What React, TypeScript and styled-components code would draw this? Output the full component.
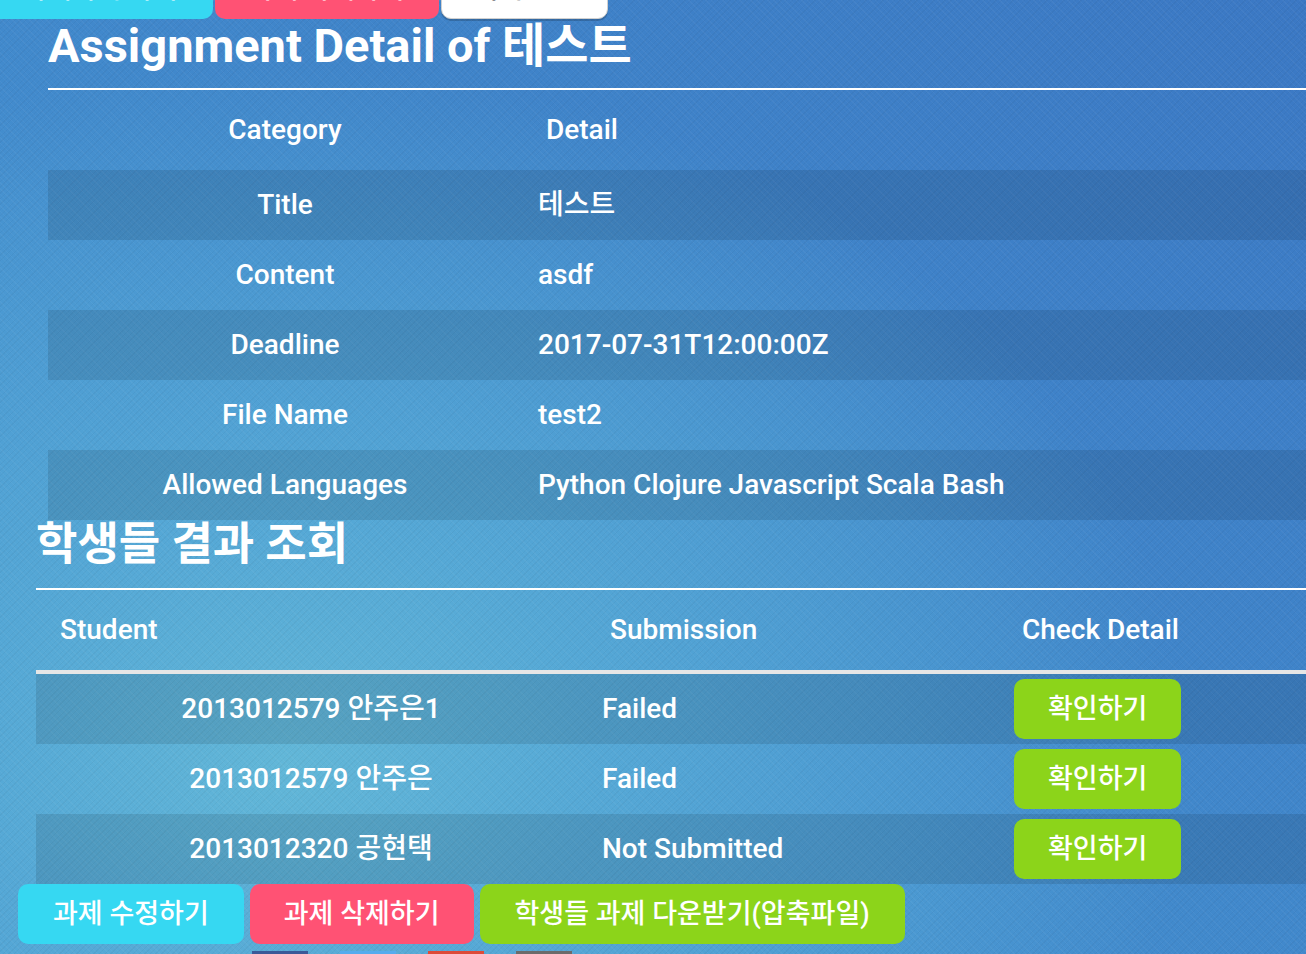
import React from "react";
import styled, { createGlobalStyle, css } from "styled-components";

const GlobalStyle = createGlobalStyle`
  html, body {
    margin: 0;
    padding: 0;
    overflow: hidden;
    height: 100%;
  }
  body {
    font-family: Roboto, "Noto Sans CJK KR", sans-serif;
    color: #ffffff;
    background: #3f87c9;
  }
  #root { height: 100%; }
`;

const FONT = `Roboto, "Noto Sans CJK KR", sans-serif`;

const Page = styled.div`
  width: 100%;
  min-height: 954px;
  overflow: hidden;
  background:
    repeating-linear-gradient(45deg, rgba(255, 255, 255, 0.035) 0 1px, transparent 1px 4px),
    repeating-linear-gradient(-45deg, rgba(0, 0, 0, 0.035) 0 1px, transparent 1px 4px),
    radial-gradient(ellipse 900px 700px at 22% 78%, #62b7d8 0%, #55a8d6 35%, rgba(70, 145, 210, 0) 100%),
    linear-gradient(to top right, #4a9ad6 0%, #4189cc 50%, #3b78c4 100%);
`;

type Variant = "cyan" | "pink" | "green" | "white";

const variantStyles: Record<Variant, ReturnType<typeof css>> = {
  cyan: css`
    background: #36d8f2;
    color: #fff;
  `,
  pink: css`
    background: #ff5274;
    color: #fff;
    padding: 0 34px;
  `,
  green: css`
    background: #8cd41a;
    color: #fff;
  `,
  white: css`
    background: #ffffff;
    color: #333;
    padding: 0 33px;
    border: 1px solid #d0d0d0;
    box-shadow: 0 2px 0 rgba(0, 0, 0, 0.18);
  `,
};

const Button = styled.button<{ $variant: Variant }>`
  height: 60px;
  padding: 0 35px;
  border: none;
  border-radius: 10px;
  font-family: ${FONT};
  font-size: 27px;
  font-weight: 500;
  line-height: 1;
  white-space: nowrap;
  cursor: pointer;
  ${(p) => variantStyles[p.$variant]}
`;

const CheckButton = styled(Button)`
  padding: 0 34px;
`;

const TopBar = styled.div`
  display: flex;
  gap: 2px;
  margin: -41px 0 0 -13px;
`;

const DetailSection = styled.section`
  padding-left: 48px;
`;

const Title = styled.h1`
  margin: 0;
  font-size: 47px;
  font-weight: 700;
  line-height: 54px;
  padding-bottom: 15px;
  border-bottom: 2px solid #ffffff;
  white-space: nowrap;
`;

const DetailTable = styled.table`
  width: 1300px;
  border-collapse: separate;
  border-spacing: 0;
  table-layout: fixed;

  tbody tr:nth-child(odd) {
    background: rgba(0, 0, 0, 0.1);
  }
`;

const Cell = styled.td<{ $align?: "center" | "left"; $pad?: number }>`
  height: 70px;
  padding: 0 0 0 ${(p) => p.$pad ?? 0}px;
  text-align: ${(p) => p.$align ?? "left"};
  vertical-align: middle;
  font-size: 28px;
  font-weight: 500;
  line-height: 32px;
  white-space: nowrap;
`;

const HeadCell = styled(Cell).attrs({ as: "th" })<{ $rule?: boolean }>`
  height: 80px;
  ${(p) =>
    p.$rule &&
    css`
      border-bottom: 4px solid #e6e6e6;
    `}
`;

const ResultSection = styled.section`
  padding-left: 36px;
`;

const SubTitle = styled.h2`
  margin: 0;
  font-size: 45px;
  font-weight: 700;
  line-height: 42px;
  padding: 4px 0 22px;
  border-bottom: 2px solid #ffffff;
  white-space: nowrap;
`;

const ResultTable = styled.table`
  width: 1300px;
  border-collapse: separate;
  border-spacing: 0;
  table-layout: fixed;

  tbody tr:nth-child(odd) {
    background: rgba(0, 0, 0, 0.1);
  }
`;

const BottomBar = styled.div`
  display: flex;
  gap: 6px;
  padding-left: 18px;
`;

const ShareRow = styled.div`
  display: flex;
  gap: 32px;
  padding-left: 252px;
  margin-top: 7px;
`;

const ShareSquare = styled.div<{ $color: string }>`
  width: 56px;
  height: 30px;
  background: ${(p) => p.$color};
`;

const details: [string, string][] = [
  ["Title", "테스트"],
  ["Content", "asdf"],
  ["Deadline", "2017-07-31T12:00:00Z"],
  ["File Name", "test2"],
  ["Allowed Languages", "Python Clojure Javascript Scala Bash"],
];

const results: [string, string][] = [
  ["2013012579 안주은1", "Failed"],
  ["2013012579 안주은", "Failed"],
  ["2013012320 공현택", "Not Submitted"],
];

export default function App() {
  return (
    <>
      <GlobalStyle />
      <Page>
        <TopBar>
          <Button $variant="cyan">과제 수정하기</Button>
          <Button $variant="pink">과제 삭제하기</Button>
          <Button $variant="white">목록으로</Button>
        </TopBar>

        <DetailSection>
          <Title>Assignment Detail of 테스트</Title>
          <DetailTable>
            <colgroup>
              <col style={{ width: 474 }} />
              <col />
            </colgroup>
            <thead>
              <tr>
                <HeadCell $align="center">Category</HeadCell>
                <HeadCell $pad={24}>Detail</HeadCell>
              </tr>
            </thead>
            <tbody>
              {details.map(([k, v]) => (
                <tr key={k}>
                  <Cell $align="center">{k}</Cell>
                  <Cell $pad={16}>{v}</Cell>
                </tr>
              ))}
            </tbody>
          </DetailTable>
        </DetailSection>

        <ResultSection>
          <SubTitle>학생들 결과 조회</SubTitle>
          <ResultTable>
            <colgroup>
              <col style={{ width: 550 }} />
              <col style={{ width: 412 }} />
              <col />
            </colgroup>
            <thead>
              <tr>
                <HeadCell $pad={24} $rule>
                  Student
                </HeadCell>
                <HeadCell $pad={24} $rule>
                  Submission
                </HeadCell>
                <HeadCell $pad={24} $rule>
                  Check Detail
                </HeadCell>
              </tr>
            </thead>
            <tbody>
              {results.map(([s, r]) => (
                <tr key={s}>
                  <Cell $align="center">{s}</Cell>
                  <Cell $pad={16}>{r}</Cell>
                  <Cell $pad={16}>
                    <CheckButton $variant="green">확인하기</CheckButton>
                  </Cell>
                </tr>
              ))}
            </tbody>
          </ResultTable>
        </ResultSection>

        <BottomBar>
          <Button $variant="cyan">과제 수정하기</Button>
          <Button $variant="pink">과제 삭제하기</Button>
          <Button $variant="green">학생들 과제 다운받기(압축파일)</Button>
        </BottomBar>

        <ShareRow>
          <ShareSquare $color="#3b5998" />
          <ShareSquare $color="#55acee" />
          <ShareSquare $color="#dd4b39" />
          <ShareSquare $color="#6b6b6b" />
        </ShareRow>
      </Page>
    </>
  );
}
